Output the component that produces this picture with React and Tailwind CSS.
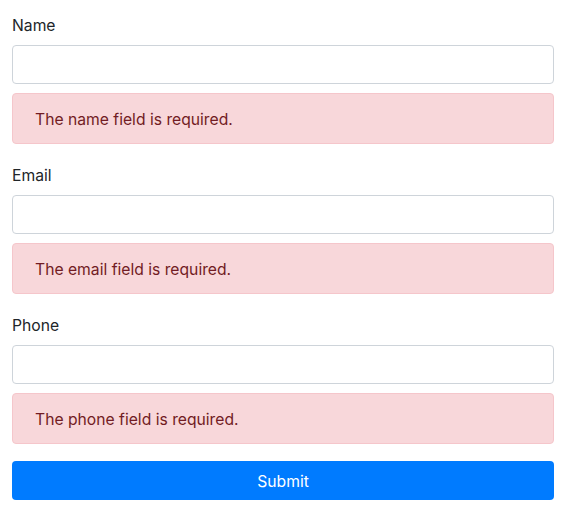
export default function App() {
  const fields = [
    { label: "Name", err: "The name field is required." },
    { label: "Email", err: "The email field is required." },
    { label: "Phone", err: "The phone field is required." },
  ];
  return (
    <div className="bg-white min-h-[513px] w-[571px] px-3 pt-[15px] text-[15.7px] text-[#212529]" style={{ fontFamily: 'Inter, "Liberation Sans", Arial, sans-serif' }}>
      <div className="w-[542px] flex flex-col">
        {fields.map((f) => (
          <div key={f.label} className="flex flex-col mb-[21px]">
            <label className="leading-[22px] h-[22px] mb-[8px]">{f.label}</label>
            <input className="h-[39px] border border-[#ced4da] rounded-[4px] bg-white outline-none" />
            <div className="mt-[9px] h-[51px] rounded-[4px] bg-[#f8d7da] border border-[#f5c6cb] text-[#721c24] flex items-center pl-[22px] pt-[2px]">
              {f.err}
            </div>
          </div>
        ))}
        <button className="-mt-[4px] h-[39px] rounded-[4px] bg-[#007bff] text-white text-[15.7px] pt-[2px]">Submit</button>
      </div>
    </div>
  );
}
